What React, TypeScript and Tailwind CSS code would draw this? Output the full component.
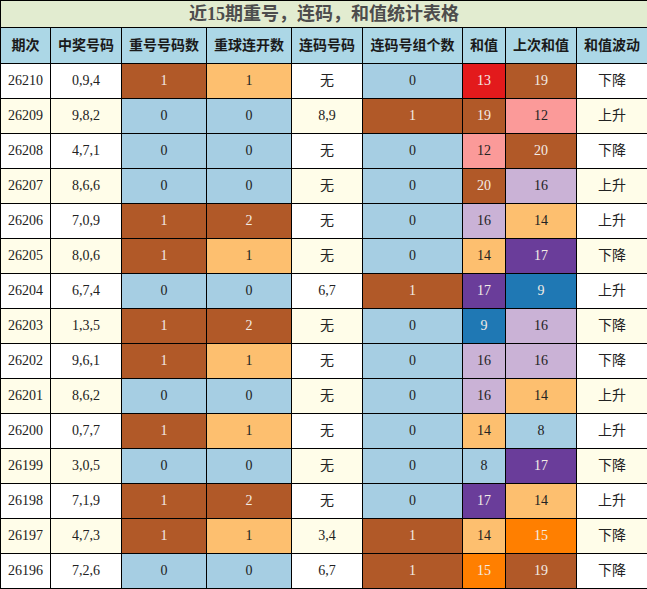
import React from "react";

const BROWN = "#b15928";
const LBLUE = "#a6cee3";
const LORANGE = "#fdbf6f";

const sumColor: Record<string, string> = {
  "13": "#e31a1c",
  "19": BROWN,
  "20": BROWN,
  "12": "#fb9a99",
  "16": "#cab2d6",
  "14": LORANGE,
  "17": "#6a3d9a",
  "9": "#1f78b4",
  "8": LBLUE,
  "15": "#ff7f00",
};

const dark = new Set([BROWN, "#e31a1c", "#6a3d9a", "#1f78b4", "#ff7f00"]);

const rows: string[][] = [
  ["26210", "0,9,4", "1", "1", "无", "0", "13", "19", "下降"],
  ["26209", "9,8,2", "0", "0", "8,9", "1", "19", "12", "上升"],
  ["26208", "4,7,1", "0", "0", "无", "0", "12", "20", "下降"],
  ["26207", "8,6,6", "0", "0", "无", "0", "20", "16", "上升"],
  ["26206", "7,0,9", "1", "2", "无", "0", "16", "14", "上升"],
  ["26205", "8,0,6", "1", "1", "无", "0", "14", "17", "下降"],
  ["26204", "6,7,4", "0", "0", "6,7", "1", "17", "9", "上升"],
  ["26203", "1,3,5", "1", "2", "无", "0", "9", "16", "下降"],
  ["26202", "9,6,1", "1", "1", "无", "0", "16", "16", "下降"],
  ["26201", "8,6,2", "0", "0", "无", "0", "16", "14", "上升"],
  ["26200", "0,7,7", "1", "1", "无", "0", "14", "8", "上升"],
  ["26199", "3,0,5", "0", "0", "无", "0", "8", "17", "下降"],
  ["26198", "7,1,9", "1", "2", "无", "0", "17", "14", "上升"],
  ["26197", "4,7,3", "1", "1", "3,4", "1", "14", "15", "下降"],
  ["26196", "7,2,6", "0", "0", "6,7", "1", "15", "19", "下降"],
];

const headers = ["期次", "中奖号码", "重号号码数", "重球连开数", "连码号码", "连码号组个数", "和值", "上次和值", "和值波动"];
const widths = [50, 71, 85, 85, 71, 100, 43, 71, 71];

function cellColor(col: number, v: string): string | null {
  if (col === 2) return v === "1" ? BROWN : LBLUE;
  if (col === 3) return v === "1" ? LORANGE : v === "2" ? BROWN : LBLUE;
  if (col === 5) return v === "1" ? BROWN : LBLUE;
  if (col === 6 || col === 7) return sumColor[v] ?? null;
  return null;
}

const FONT = { fontFamily: '"Liberation Serif", "Noto Sans CJK SC", serif' };

export default function App() {
  return (
    <div className="w-[647px] h-[589px] bg-white overflow-hidden" style={FONT}>
      <table className="border-collapse table-fixed w-[647px]">
        <colgroup>
          {widths.map((w, i) => (
            <col key={i} style={{ width: w }} />
          ))}
        </colgroup>
        <tbody>
          <tr className="h-[27px]">
            <td
              colSpan={9}
              className="border border-black bg-[#e2ecd0] text-center text-[18px] font-bold text-[#4d4d4d] leading-none p-0"
            >
              近15期重号，连码，和值统计表格
            </td>
          </tr>
          <tr className="h-[36px]">
            {headers.map((h) => (
              <td
                key={h}
                className="border border-black bg-[#acd7e6] text-center text-[14px] font-bold text-[#1a1a1a] p-0 leading-none"
              >
                {h}
              </td>
            ))}
          </tr>
          {rows.map((r, ri) => {
            const rowBg = ri % 2 === 0 ? "#ffffff" : "#fffde9";
            return (
              <tr key={r[0]} className="h-[35px]">
                {r.map((v, ci) => {
                  const c = cellColor(ci, v);
                  const bg = c ?? rowBg;
                  const fg = c && dark.has(c) ? "#f3ece6" : "#222222";
                  return (
                    <td
                      key={ci}
                      className="border border-black text-center text-[14px] p-0 leading-none"
                      style={{ backgroundColor: bg, color: fg }}
                    >
                      {v}
                    </td>
                  );
                })}
              </tr>
            );
          })}
        </tbody>
      </table>
    </div>
  );
}
